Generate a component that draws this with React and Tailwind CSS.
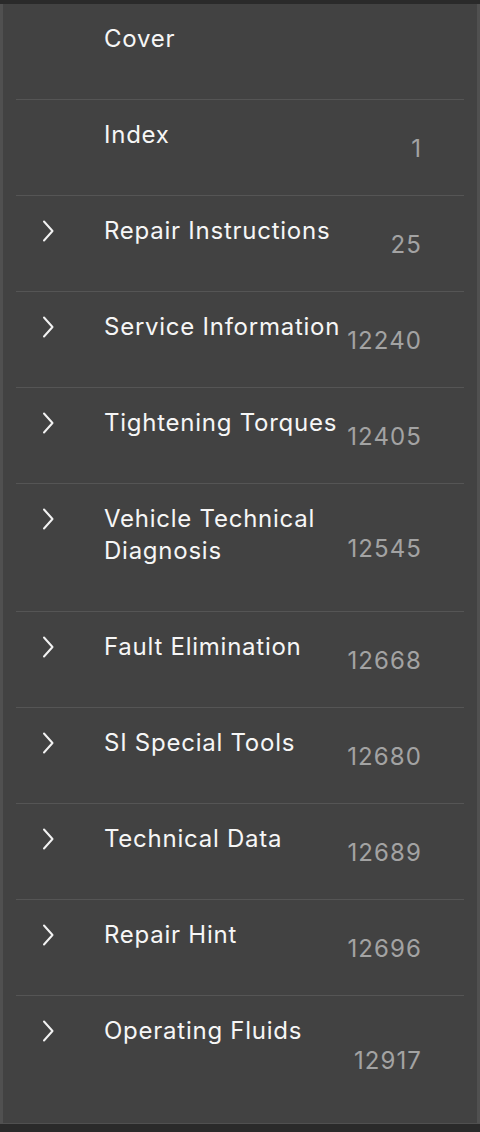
import React from "react";

const items = [
  { title: "Cover", num: null, chevron: false },
  { title: "Index", num: "1", chevron: false },
  { title: "Repair Instructions", num: "25", chevron: true },
  { title: "Service Information", num: "12240", chevron: true },
  { title: "Tightening Torques", num: "12405", chevron: true },
  { title: ["Vehicle Technical", "Diagnosis"], num: "12545", chevron: true },
  { title: "Fault Elimination", num: "12668", chevron: true },
  { title: "SI Special Tools", num: "12680", chevron: true },
  { title: "Technical Data", num: "12689", chevron: true },
  { title: "Repair Hint", num: "12696", chevron: true },
  { title: "Operating Fluids", num: "12917", chevron: true, last: true },
];

function Chevron() {
  return (
    <svg width="14" height="24" viewBox="0 0 14 24" fill="none">
      <path d="M3 2.5 L11.5 12 L3 21.5" stroke="#f2f2f2" strokeWidth="2" strokeLinecap="round" strokeLinejoin="round" />
    </svg>
  );
}

export default function App() {
  return (
    <div className="w-[480px] h-[1132px] bg-[#2a2a2a] pt-[4px] pb-[8px]" style={{ fontFamily: "Inter, 'Liberation Sans', sans-serif" }}>
      <div className="h-full bg-[#424242] border-l-[3px] border-r-[3px] border-b border-[#505050] flex flex-col">
        {items.map((it, i) => (
          <div
            key={i}
            className={`mx-[13px] flex ${it.last ? "flex-1" : "border-b border-[#555555]"} ${Array.isArray(it.title) ? "h-[128px]" : it.last ? "" : "h-[96px]"}`}
          >
            <div className="w-[88px] pl-[25px] pt-[23px]">
              {it.chevron && <Chevron />}
            </div>
            <div className="flex-1 pt-[19px] text-[24px] leading-[32px] text-[#f6f6f6] tracking-[0.75px]">
              {Array.isArray(it.title) ? it.title.map((t, j) => <div key={j}>{t}</div>) : it.title}
            </div>
            <div className="flex items-center pr-[42px] pt-[3px] text-[24px] tracking-[1.1px] text-[#a3a3a3]">
              {it.num}
            </div>
          </div>
        ))}
      </div>
    </div>
  );
}
